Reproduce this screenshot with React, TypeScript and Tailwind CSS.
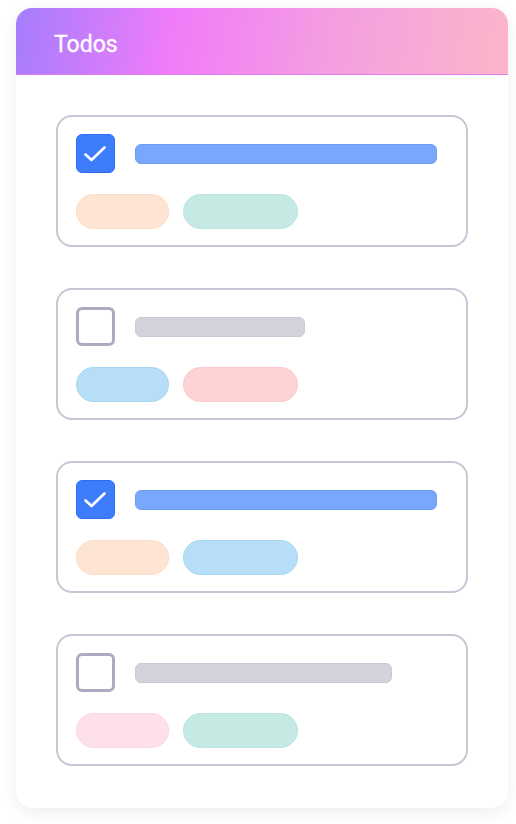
import React from "react";

type Item = { checked: boolean; barW: string; pills: [string, string] };

const items: Item[] = [
  { checked: true, barW: "w-[302px]", pills: ["bg-[#fee5d3] border-[#fddcc5]", "bg-[#c5eae4] border-[#b9e5dd]"] },
  { checked: false, barW: "w-[170px]", pills: ["bg-[#b6dff7] border-[#a6d7f4]", "bg-[#ffd3d6] border-[#fdc7cb]"] },
  { checked: true, barW: "w-[302px]", pills: ["bg-[#fee5d3] border-[#fddcc5]", "bg-[#b6dff7] border-[#a6d7f4]"] },
  { checked: false, barW: "w-[257px]", pills: ["bg-[#fee0e9] border-[#fdd6e1]", "bg-[#c5eae4] border-[#b9e5dd]"] },
];

function Check() {
  return (
    <svg width="39" height="39" viewBox="0 0 39 39" fill="none" className="absolute left-[-1px] top-[-1px]">
      <path d="M9.5 20.5l6 5.5L28.5 13.5" stroke="white" strokeWidth="2.6" strokeLinecap="round" strokeLinejoin="round" />
    </svg>
  );
}

function TodoCard({ item }: { item: Item }) {
  return (
    <div className="h-[132px] rounded-[16px] border-2 border-[#c9c5d5] bg-white pl-[18px] pt-[17px]">
      <div className="flex items-center gap-[20px]">
        {item.checked ? (
          <div className="relative h-[39px] w-[39px] rounded-[6px] border border-[#2e6cf4] bg-[#3d7cfb]">
            <Check />
          </div>
        ) : (
          <div className="h-[39px] w-[39px] rounded-[6px] border-[3px] border-[#aeaac0] bg-white" />
        )}
        <div
          className={`h-[20px] ${item.barW} rounded-[6px] border ${
            item.checked ? "border-[#6c9cf8] bg-[#79a7fc]" : "border-[#cbc7d6] bg-[#d5d2de]"
          }`}
        />
      </div>
      <div className="mt-[21px] flex gap-[14px]">
        <div className={`h-[35px] w-[93px] rounded-full border ${item.pills[0]}`} />
        <div className={`h-[35px] w-[115px] rounded-full border ${item.pills[1]}`} />
      </div>
    </div>
  );
}

export default function App() {
  return (
    <div className="h-[824px] w-[516px] bg-white pl-[16px] pt-[8px]" style={{ fontFamily: "Roboto, 'Liberation Sans', sans-serif" }}>
      <div className="h-[800px] w-[492px] overflow-hidden rounded-[16px] bg-white shadow-[0_4px_16px_rgba(0,0,0,0.07)]">
        <div className="flex h-[67px] items-center border-b border-[#e27cf0] bg-[linear-gradient(100deg,#a47dfd_0%,#f07cf9_32%,#f59fe0_65%,#fbb6c9_100%)] pl-[38px] pt-[7px]">
          <span className="text-[23px] leading-none text-white [-webkit-text-stroke:0.3px_white]">Todos</span>
        </div>
        <div className="flex flex-col gap-[41px] px-[40px] pt-[40px]">
          {items.map((it, i) => (
            <TodoCard key={i} item={it} />
          ))}
        </div>
      </div>
    </div>
  );
}
